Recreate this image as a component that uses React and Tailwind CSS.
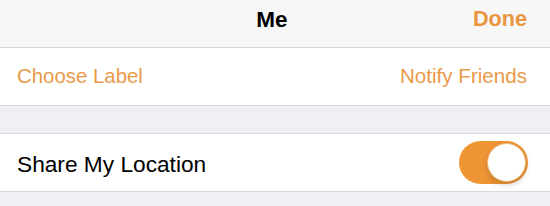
import React from "react";

const Toggle = ({ on }) => (
  <div
    className={`relative w-[69px] h-[43px] rounded-full ${
      on ? "bg-[#f09534]" : "bg-[#e5e5ea]"
    }`}
  >
    <div
      className={`absolute top-[2px] w-[39px] h-[39px] rounded-full bg-white border border-[#eeb46f] shadow-[0_3px_6px_rgba(0,0,0,0.18)] ${
        on ? "right-[2px]" : "left-[2px]"
      }`}
    />
  </div>
);

export default function App() {
  return (
    <div
      className="w-[550px] h-[206px] bg-[#efeff4] overflow-hidden"
      style={{ fontFamily: '"Liberation Sans", Arial, sans-serif' }}
    >
      {/* nav bar */}
      <div className="h-[48px] bg-[#f7f7f7] border-b border-[#d6d6da] flex items-center justify-between pl-[17px] pr-[23px] pb-[8px]">
        <div className="w-[60px]" />
        <span className="text-[22.5px] font-bold text-black ml-[50px]">Me</span>
        <span className="text-[21.6px] font-bold text-[#e9963f] w-[110px] text-right">Done</span>
      </div>

      {/* actions */}
      <div className="h-[58px] bg-white border-b border-[#d9d9de] flex items-center justify-between pl-[17px] pr-[23px]">
        <span className="text-[20.4px] text-[#e99a49]">Choose Label</span>
        <span className="text-[20.6px] text-[#e99a49]">Notify Friends</span>
      </div>

      <div className="h-[27px]" />

      {/* share */}
      <div className="h-[59px] bg-white border-y border-[#d9d9de] flex items-center justify-between pl-[17px] pr-[22px]">
        <span className="text-[22.7px] text-black pt-[3px]">Share My Location</span>
        <Toggle on />
      </div>
    </div>
  );
}
